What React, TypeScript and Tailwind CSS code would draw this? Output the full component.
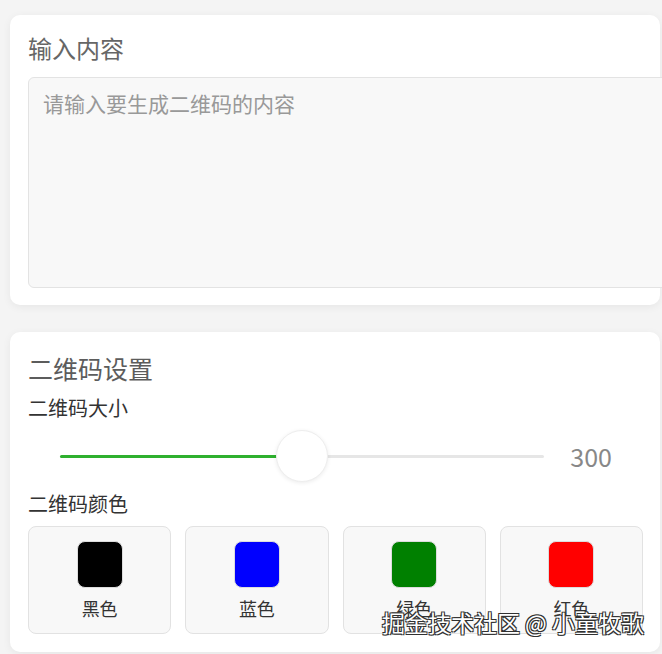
import { useState } from 'react'

const colors = [
  { name: '黑色', value: '#000000' },
  { name: '蓝色', value: '#0000ff' },
  { name: '绿色', value: '#008000' },
  { name: '红色', value: '#ff0000' },
]

export default function App() {
  const [size] = useState(300)
  const [text, setText] = useState('')
  const pct = ((size - 100) / 400) * 100

  return (
    <div className="relative min-h-[654px] w-[662px] overflow-hidden bg-[#f4f4f4] pt-[15px] font-['Microsoft_YaHei','Noto_Sans_CJK_SC',sans-serif]">
      {/* Input card */}
      <div className="ml-[10px] w-[650px] rounded-[10px] bg-white px-[18px] pt-[17px] pb-[17px] shadow-[0_2px_8px_rgba(0,0,0,0.06)]">
        <h2 className="text-[24px] leading-[32px] text-[#666]">输入内容</h2>
        <textarea
          value={text}
          onChange={(e) => setText(e.target.value)}
          placeholder="请输入要生成二维码的内容"
          className="mt-[13px] block h-[211px] w-[660px] resize-none rounded-[6px] border border-[#e3e3e3] bg-[#f8f8f8] px-[14px] py-[11px] text-[21px] leading-[28px] text-[#333] outline-none placeholder:text-[#999]"
        />
      </div>

      {/* Settings card */}
      <div className="mt-[27px] ml-[10px] w-[650px] rounded-[10px] bg-white pl-[18px] pr-[17px] pt-[20px] pb-[18px] shadow-[0_2px_8px_rgba(0,0,0,0.06)]">
        <h2 className="text-[25px] leading-[32px] text-[#5c5c5c]">二维码设置</h2>
        <div className="mt-[10px] text-[20px] leading-[28px] text-[#333]">二维码大小</div>

        <div className="flex h-[68px] items-center gap-[26px] pl-[32px] pr-[31px]">
          <div className="relative h-[3px] flex-1 rounded-full bg-[#e6e6e6]">
            <div className="h-full rounded-full bg-[#2eb02e]" style={{ width: `${pct}%` }} />
            <div
              className="absolute top-1/2 h-[52px] w-[52px] -translate-x-1/2 -translate-y-1/2 rounded-full border border-[#eee] bg-white shadow-[0_1px_4px_rgba(0,0,0,0.08)]"
              style={{ left: `${pct}%` }}
            />
          </div>
          <span className="text-[25px] leading-[30px] text-[#888]">{size}</span>
        </div>

        <div className="text-[20px] leading-[28px] text-[#333]">二维码颜色</div>
        <div className="mt-[8px] grid grid-cols-4 gap-[14px]">
          {colors.map((c) => (
            <button
              key={c.name}
              className="flex h-[108px] flex-col items-center rounded-[8px] border border-[#e2e2e2] bg-[#f8f8f8] pt-[14px]"
            >
              <span
                className="block h-[47px] w-[46px] rounded-[8px] border border-[#ddd]"
                style={{ backgroundColor: c.value }}
              />
              <span className="mt-[7px] text-[18px] leading-[26px] text-[#333]">{c.name}</span>
            </button>
          ))}
        </div>
      </div>

      {/* Watermark */}
      <div className="pointer-events-none absolute top-[607px] right-[18px] text-[23px] leading-[30px] text-white [text-shadow:0_0_1px_#222,1px_1px_0_#333,-1px_-1px_0_#333,1px_-1px_0_#333,-1px_1px_0_#333]">
        掘金技术社区 @ 小童牧歌
      </div>
    </div>
  )
}
